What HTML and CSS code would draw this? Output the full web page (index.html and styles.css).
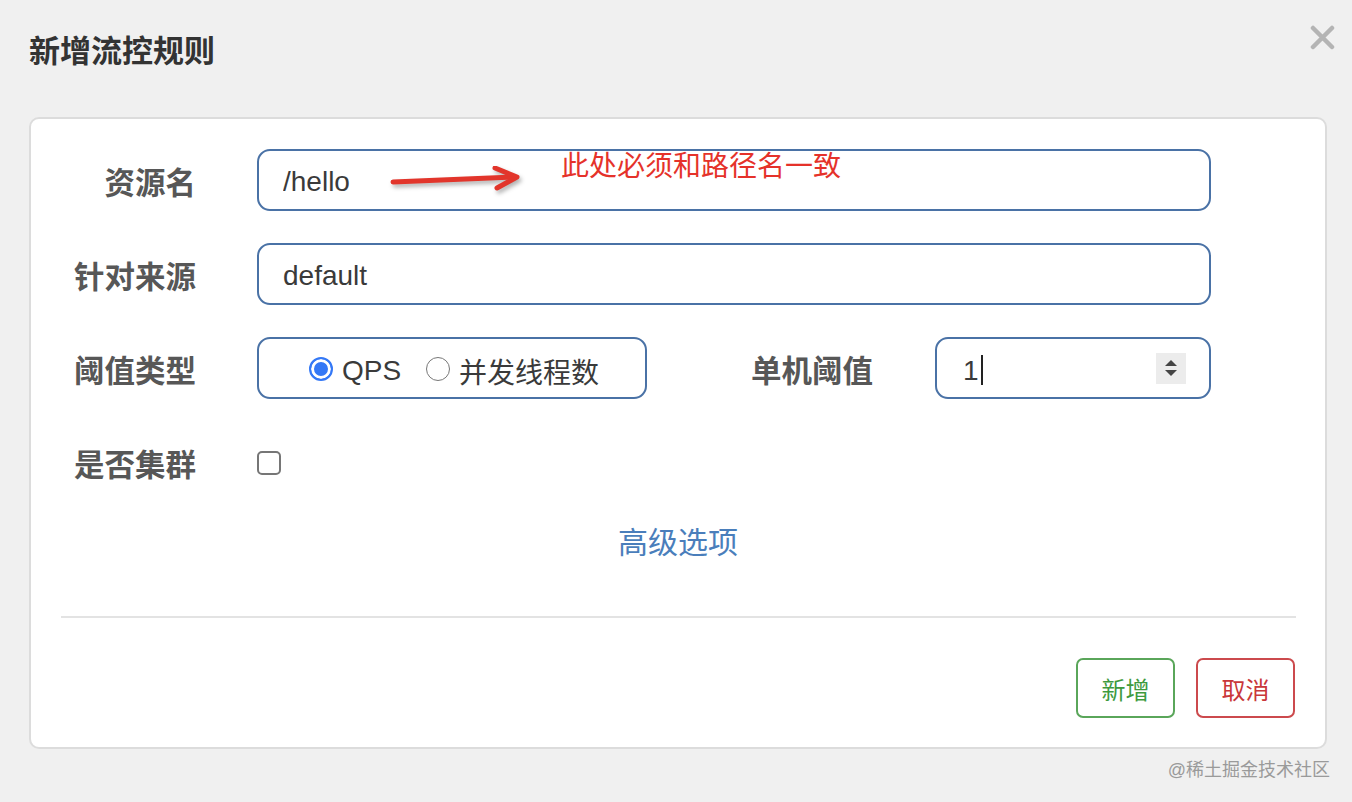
FILE: index.html
```html
<!DOCTYPE html>
<html lang="zh-CN">
<head>
  <meta charset="UTF-8">
  <meta name="viewport" content="width=device-width, initial-scale=1.0">
  <title>新增流控规则</title>

  <link rel="stylesheet" href="styles.css">
</head>
<body>
  <div class="dialog">
    <div class="dialog-header">
      <h1 class="title">新增流控规则</h1>
      <span class="close">
        <svg width="25" height="25" viewBox="0 0 25 25">
          <path d="M3 3 L22 22 M22 3 L3 22" stroke="#b4b4b4" stroke-width="4.5" stroke-linecap="round"/>
        </svg>
      </span>
    </div>

    <div class="card">
      <div class="form">
        <label class="form-label" for="resource">资源名</label>
        <div class="field-wrap">
          <input class="form-input" type="text" id="resource" value="/hello">
          <svg class="note-arrow" width="136" height="26" viewBox="0 0 136 26">
            <path d="M3 16 L124 11" stroke="#e2352b" stroke-width="5" stroke-linecap="round" fill="none"/>
            <path d="M105 2 L127 11 L107 22" stroke="#e2352b" stroke-width="5" stroke-linecap="round" stroke-linejoin="round" fill="none"/>
          </svg>
          <span class="note-text">此处必须和路径名一致</span>
        </div>

        <label class="form-label" for="origin">针对来源</label>
        <div class="field-wrap">
          <input class="form-input" type="text" id="origin" value="default">
        </div>

        <span class="form-label">阈值类型</span>
        <div class="d-flex split-row">
          <div class="radio-box">
            <span class="radio">
              <span class="radio-dot checked"></span>
              QPS
            </span>
            <span class="radio">
              <span class="radio-dot"></span>
              并发线程数
            </span>
          </div>
          <span class="form-label inline-label">单机阈值</span>
          <div class="num-input">
            <span class="num-value">1</span><span class="caret"></span>
            <span class="spinner">
              <svg width="16" height="22" viewBox="0 0 16 22">
                <path d="M2 9 L8 3 L14 9 Z" fill="#444"/>
                <path d="M2 13 L8 19 L14 13 Z" fill="#444"/>
              </svg>
            </span>
          </div>
        </div>

        <span class="form-label">是否集群</span>
        <div class="check-cell">
          <span class="checkbox"></span>
        </div>
      </div>

      <div class="advanced"><a href="#">高级选项</a></div>

      <hr>

      <div class="footer">
        <button class="btn btn-green">新增</button>
        <button class="btn btn-red">取消</button>
      </div>
    </div>

    <div class="watermark">@稀土掘金技术社区</div>
  </div>
</body>
</html>
```

FILE: styles.css
```css
* {
  box-sizing: border-box;
  padding: 0;
  margin: 0;
}

body {
  background-color: #f0f0f0;
  font-family: 'Liberation Sans', 'Noto Sans CJK SC', sans-serif;
  color: #444;
}

.d-flex {
  display: flex;
}

.dialog-header {
  display: flex;
  justify-content: space-between;
  align-items: flex-start;
  height: 117px;
  padding: 30px 17px 0 29px;
}

.title {
  font-size: 31px;
  line-height: 44px;
  font-weight: bold;
  color: #333;
}

.close {
  margin-top: -5px;
  display: block;
}

.card {
  margin: 0 25px 0 29px;
  background-color: white;
  border: 2px solid #dcdcdc;
  border-radius: 10px;
  padding: 30px 0 29px 0;
}

.form {
  display: grid;
  grid-template-columns: 165px 1fr;
  grid-auto-rows: 62px;
  column-gap: 61px;
  row-gap: 32px;
  padding-right: 114px;
}

.form-label {
  font-size: 30.5px;
  font-weight: bold;
  color: #575757;
  text-align: right;
  padding-top: 6px;
  line-height: 56px;
}

.field-wrap {
  position: relative;
  height: 62px;
}

.form-input {
  width: 100%;
  height: 62px;
  border: 2px solid #4a72a6;
  border-radius: 13px;
  padding: 3px 24px 0 24px;
  font-family: 'Liberation Sans', 'Noto Sans CJK SC', sans-serif;
  font-size: 28px;
  color: #3a3a3a;
  outline: none;
}

.note-arrow {
  position: absolute;
  left: 133px;
  top: 17px;
  filter: drop-shadow(2px 3px 2px rgba(0, 0, 0, 0.3));
}

.note-text {
  position: absolute;
  left: 304px;
  top: 1px;
  font-size: 28px;
  line-height: 34px;
  color: #e5322a;
}

.split-row {
  align-items: center;
  height: 62px;
}

.radio-box {
  width: 390px;
  height: 62px;
  border: 2px solid #4a72a6;
  border-radius: 13px;
  display: flex;
  align-items: center;
  justify-content: center;
  gap: 25px;
  padding: 6px 0 0 4px;
}

.radio {
  display: flex;
  align-items: center;
  gap: 9px;
  font-size: 28px;
  color: #3a3a3a;
}

.radio-dot {
  width: 24px;
  height: 24px;
  border-radius: 50%;
  border: 1.5px solid #777;
  background-color: white;
  margin-top: -4px;
}

.radio-dot.checked {
  border: 2px solid #3478f6;
  background-color: #3478f6;
  box-shadow: inset 0 0 0 3px white;
}

.inline-label {
  flex: 1;
  margin-right: 62px;
  align-self: stretch;
}

.num-input {
  width: 276px;
  height: 62px;
  border: 2px solid #4a72a6;
  border-radius: 13px;
  display: flex;
  align-items: center;
  padding: 0 23px 0 26px;
  font-size: 28px;
  color: #3a3a3a;
}

.num-value {
  padding-top: 5px;
}

.caret {
  width: 2px;
  height: 30px;
  background-color: #222;
  margin: 4px 0 0 2px;
}

.spinner {
  margin-left: auto;
  width: 30px;
  height: 31px;
  background-color: #ececec;
  display: flex;
  align-items: center;
  justify-content: center;
}

.check-cell {
  display: flex;
  align-items: center;
  padding-top: 2px;
}

.checkbox {
  width: 24px;
  height: 24px;
  border: 2px solid #767676;
  border-radius: 5px;
}

.advanced {
  text-align: center;
  margin-top: 30px;
  line-height: 40px;
  font-size: 30px;
}

.advanced a {
  color: #4a7ebb;
  text-decoration: none;
}

hr {
  margin: 53px 29px 0 30px;
  border: none;
  height: 2px;
  background-color: #e3e3e3;
}

.footer {
  display: flex;
  justify-content: flex-end;
  gap: 21px;
  margin-top: 40px;
  padding-right: 30px;
}

.btn {
  width: 99px;
  height: 60px;
  border-radius: 7px;
  background-color: white;
  font-family: 'Noto Sans CJK SC', sans-serif;
  font-size: 24px;
}

.btn-green {
  color: #3e9a3e;
  border: 2px solid #5aa65a;
}

.btn-red {
  color: #c9373a;
  border: 2px solid #cc4a4d;
}

.watermark {
  text-align: right;
  padding-right: 22px;
  margin-top: 8px;
  font-size: 18px;
  line-height: 26px;
  color: #9a9a9a;
}
```
